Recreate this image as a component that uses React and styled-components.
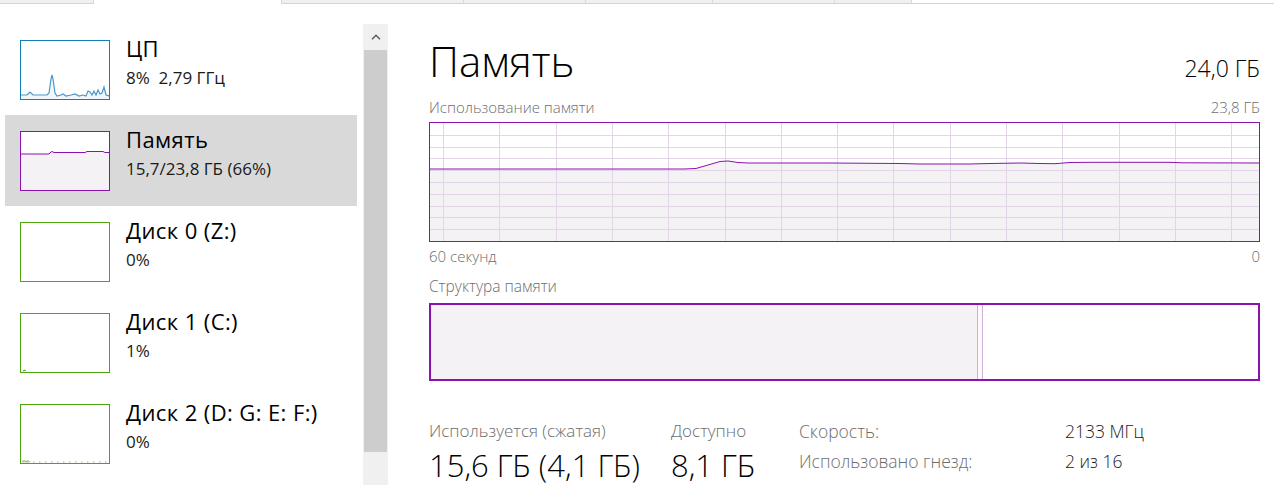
import styled, { createGlobalStyle } from 'styled-components';

const PURPLE = '#8b12ae';
const LAVENDER = '#f4f2f4';
const GRID = '#e2d5e6';

const GlobalStyle = createGlobalStyle`
  html, body {
    margin: 0;
    padding: 0;
    background: #fff;
  }
  body {
    font-family: 'Open Sans', 'Noto Sans', sans-serif;
    overflow: hidden;
  }
`;

const tabs = [
  { w: 94 },
  { w: 188, selected: true },
  { w: 182 },
  { w: 122 },
  { w: 127 },
  { w: 122 },
  { w: 77 },
];

const sidebarItems = [
  { id: 'cpu', title: 'ЦП', sub: '8%  2,79 ГГц', kind: 'cpu' },
  { id: 'mem', title: 'Память', sub: '15,7/23,8 ГБ (66%)', kind: 'mem', selected: true },
  { id: 'd0', title: 'Диск 0 (Z:)', sub: '0%', kind: 'disk0' },
  { id: 'd1', title: 'Диск 1 (C:)', sub: '1%', kind: 'disk1' },
  { id: 'd2', title: 'Диск 2 (D: G: E: F:)', sub: '0%', kind: 'disk2' },
];

// memory usage line (chart inner coords 829 x 118)
const memPoints = [
  [0, 46], [254, 46], [266, 45.5], [278, 42], [290, 38.5], [298, 38], [308, 39.5],
  [318, 40], [400, 40], [470, 40.5], [490, 41], [540, 41], [560, 40.5], [590, 40],
  [610, 40.5], [625, 40.7], [640, 39.5], [660, 39.3], [740, 39.3], [752, 39.8], [829, 40],
];

const Window = styled.div`
  width: 1274px;
  height: 485px;
  display: flex;
  flex-direction: column;
  overflow: hidden;
`;

const TabStrip = styled.div`
  display: flex;
  height: 4px;
  flex-shrink: 0;
`;

const Tab = styled.div`
  width: ${(p) => p.$w}px;
  box-sizing: border-box;
  background: ${(p) => (p.$selected ? '#fff' : '#f0f0f0')};
  border-right: 1px solid #d9d9d9;
  border-bottom: ${(p) => (p.$selected ? 'none' : '1px solid #d4d4d4')};
`;

const TabFiller = styled.div`
  flex: 1;
  border-bottom: 1px solid #d4d4d4;
`;

const Body = styled.div`
  flex: 1;
  display: flex;
  min-height: 0;
`;

const Sidebar = styled.div`
  width: 388px;
  display: flex;
  flex-shrink: 0;
`;

const List = styled.div`
  width: 352px;
  margin-left: 5px;
  padding-top: 20px;
`;

const Item = styled.div`
  height: 91px;
  display: flex;
  align-items: flex-start;
  padding-left: 15px;
  box-sizing: border-box;
  background: ${(p) => (p.$selected ? '#d9d9d9' : 'transparent')};
`;

const Thumb = styled.div`
  width: 90px;
  height: 60px;
  margin-top: 16px;
  box-sizing: border-box;
  border: 1px solid ${(p) => p.$color};
  background: #fff;
  flex-shrink: 0;
  svg {
    display: block;
  }
`;

const ItemText = styled.div`
  margin-left: 16px;
  padding-top: 11px;
  color: #000;
  white-space: nowrap;
`;

const ItemTitle = styled.div`
  font-size: 22px;
  line-height: 26px;
  letter-spacing: 0.4px;
`;

const ItemSub = styled.div`
  font-size: 17px;
  line-height: 20px;
  margin-top: 7px;
  color: #1a1a1a;
  white-space: pre;
`;

const Scrollbar = styled.div`
  width: 25px;
  margin-left: 6px;
  margin-top: 20px;
  background: #f0f0f0;
  display: flex;
  flex-direction: column;
`;

const ScrollArrow = styled.div`
  height: 26px;
  display: flex;
  align-items: center;
  justify-content: center;
`;

const ScrollThumb = styled.div`
  height: 402px;
  margin: 0 1px;
  background: #cdcdcd;
`;

const Panel = styled.div`
  width: 831px;
  margin-left: 41px;
  padding-top: 31px;
  display: flex;
  flex-direction: column;
`;

const Header = styled.div`
  height: 52px;
  display: flex;
  justify-content: space-between;
  align-items: baseline;
`;

const Title = styled.div`
  font-size: 42px;
  line-height: 52px;
  font-weight: 300;
  color: #000;
`;

const Total = styled.div`
  font-size: 23px;
  font-weight: 300;
  color: #000;
`;

const LabelRow = styled.div`
  display: flex;
  justify-content: space-between;
  margin-top: ${(p) => p.$mt}px;
  font-size: ${(p) => p.$fs || 15}px;
  line-height: 19px;
  font-weight: 300;
  color: #6d6d6d;
`;

const Chart = styled.div`
  margin-top: 5px;
  height: 120px;
  box-sizing: border-box;
  border: 1px solid ${PURPLE};
  svg {
    display: block;
  }
`;

const Composition = styled.div`
  margin-top: 7px;
  height: 78px;
  box-sizing: border-box;
  border: 2px solid ${PURPLE};
  display: flex;
`;

const Segment = styled.div`
  width: ${(p) => p.$w}px;
  flex: ${(p) => (p.$w ? 'none' : 1)};
  background: ${(p) => p.$bg};
  border-right: ${(p) => (p.$edge ? '1px solid #cdb0d8' : 'none')};
`;

const Stats = styled.div`
  margin-top: 39px;
  display: grid;
  grid-template-columns: 242px 128px 266px 1fr;
`;

const StatBlock = styled.div`
  display: flex;
  flex-direction: column;
`;

const StatLabel = styled.div`
  font-size: 17px;
  line-height: 22px;
  font-weight: 300;
  color: #6d6d6d;
`;

const StatValue = styled.div`
  margin-top: 5px;
  font-size: 31px;
  line-height: 36px;
  font-weight: 300;
  color: #000;
  white-space: nowrap;
`;

const Props = styled.div`
  display: grid;
  row-gap: 8px;
  align-content: start;
`;

const PropText = styled.div`
  font-size: 17.5px;
  line-height: 22px;
  font-weight: 300;
  color: ${(p) => (p.$value ? '#1a1a1a' : '#6d6d6d')};
`;

const toPath = (pts) => pts.map(([x, y], i) => `${i ? 'L' : 'M'}${x} ${y}`).join(' ');

function MemoryChart() {
  const w = 829;
  const h = 118;
  const vLines = [];
  for (let x = 13; x < w; x += 56.3) vLines.push(Math.round(x) + 0.5);
  const hLines = [];
  for (let k = 1; k < 10; k++) hLines.push(Math.round((h / 10) * k) + 0.5);
  const line = toPath(memPoints);
  return (
    <svg width={w} height={h} viewBox={`0 0 ${w} ${h}`}>
      <path d={`${line} L${w} ${h} L0 ${h} Z`} fill={LAVENDER} />
      {vLines.map((x) => (
        <line key={`v${x}`} x1={x} y1={0} x2={x} y2={h} stroke={GRID} strokeWidth="1" />
      ))}
      {hLines.map((y) => (
        <line key={`h${y}`} x1={0} y1={y} x2={w} y2={y} stroke={GRID} strokeWidth="1" />
      ))}
      <path d={line} fill="none" stroke={PURPLE} strokeWidth="1" />
    </svg>
  );
}

function ThumbGraph({ kind }) {
  if (kind === 'cpu') {
    const pts = [
      [0, 54], [6, 54], [9, 51], [12, 54], [26, 54], [28, 52], [30, 38], [31, 34],
      [32, 38], [34, 52], [36, 55], [40, 54], [42, 53], [45, 55], [50, 54], [54, 53],
      [58, 55], [62, 54], [65, 55], [67, 50], [69, 51], [71, 54], [73, 50], [75, 54],
      [77, 49], [79, 53], [81, 52], [83, 46], [85, 54], [88, 55],
    ];
    const d = toPath(pts);
    return (
      <svg width="88" height="58" viewBox="0 0 88 58">
        <path d={`${d} L88 58 L0 58 Z`} fill="#f1f6fa" />
        <path d={d} fill="none" stroke="#4b97cb" strokeWidth="1.2" />
      </svg>
    );
  }
  if (kind === 'mem') {
    const pts = [
      [0, 22], [28, 22], [30, 20], [31, 19.5], [33, 20.5], [64, 20.5], [66, 19.5],
      [82, 19.5], [84, 20.5], [88, 20.5],
    ];
    const d = toPath(pts);
    return (
      <svg width="88" height="58" viewBox="0 0 88 58">
        <path d={`${d} L88 58 L0 58 Z`} fill={LAVENDER} />
        <path d={d} fill="none" stroke={PURPLE} strokeWidth="1" />
      </svg>
    );
  }
  if (kind === 'disk1') {
    return (
      <svg width="88" height="58" viewBox="0 0 88 58">
        <path d="M2 57 L4 56 L5 57" fill="none" stroke="#4da60c" strokeWidth="1" />
      </svg>
    );
  }
  if (kind === 'disk2') {
    const dots = [2, 4, 6, 12, 18, 24, 30, 36, 42, 48, 54, 60, 66, 72, 78, 84];
    return (
      <svg width="88" height="58" viewBox="0 0 88 58">
        <path d="M1 57 L3 55.5 L5 56.5 L7 55.8 L9 57" fill="none" stroke="#7fbf4f" strokeWidth="1" />
        {dots.map((x) => (
          <rect key={x} x={x} y={56.5} width="1.5" height="1" fill="#8cc65e" />
        ))}
      </svg>
    );
  }
  return null;
}

const thumbColor = (kind) => {
  if (kind === 'cpu') return '#117dbb';
  if (kind === 'mem') return PURPLE;
  return '#4da60c';
};

export default function App() {
  return (
    <Window>
      <GlobalStyle />
      <TabStrip>
        {tabs.map((t, i) => (
          <Tab key={i} $w={t.w} $selected={t.selected} />
        ))}
        <TabFiller />
      </TabStrip>
      <Body>
        <Sidebar>
          <List>
            {sidebarItems.map((it) => (
              <Item key={it.id} $selected={it.selected}>
                <Thumb $color={thumbColor(it.kind)}>
                  <ThumbGraph kind={it.kind} />
                </Thumb>
                <ItemText>
                  <ItemTitle>{it.title}</ItemTitle>
                  <ItemSub>{it.sub}</ItemSub>
                </ItemText>
              </Item>
            ))}
          </List>
          <Scrollbar>
            <ScrollArrow>
              <svg width="10" height="6" viewBox="0 0 10 6">
                <path d="M1 5.2 L5 1.3 L9 5.2" fill="none" stroke="#606060" strokeWidth="1.6" />
              </svg>
            </ScrollArrow>
            <ScrollThumb />
          </Scrollbar>
        </Sidebar>

        <Panel>
          <Header>
            <Title>Память</Title>
            <Total>24,0 ГБ</Total>
          </Header>
          <LabelRow $mt={11}>
            <span>Использование памяти</span>
            <span>23,8 ГБ</span>
          </LabelRow>
          <Chart>
            <MemoryChart />
          </Chart>
          <LabelRow $mt={5}>
            <span>60 секунд</span>
            <span>0</span>
          </LabelRow>
          <LabelRow $mt={11} $fs={15.5}>
            <span>Структура памяти</span>
          </LabelRow>
          <Composition>
            <Segment $w={546} $bg={LAVENDER} $edge />
            <Segment $w={4} $bg="#fbf9fb" $edge />
            <Segment $bg="#fff" />
          </Composition>
          <Stats>
            <StatBlock>
              <StatLabel>Используется (сжатая)</StatLabel>
              <StatValue>15,6 ГБ (4,1 ГБ)</StatValue>
            </StatBlock>
            <StatBlock>
              <StatLabel>Доступно</StatLabel>
              <StatValue>8,1 ГБ</StatValue>
            </StatBlock>
            <Props>
              <PropText>Скорость:</PropText>
              <PropText>Использовано гнезд:</PropText>
            </Props>
            <Props>
              <PropText $value>2133 МГц</PropText>
              <PropText $value>2 из 16</PropText>
            </Props>
          </Stats>
        </Panel>
      </Body>
    </Window>
  );
}
